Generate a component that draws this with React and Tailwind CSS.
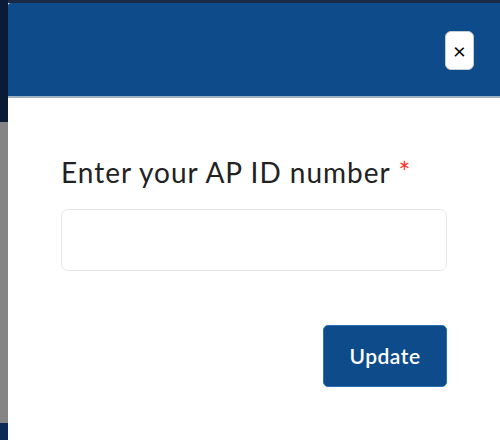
const App = () => {
  return (
    <div className="flex w-[500px] h-[440px] bg-white overflow-hidden" style={{ fontFamily: "Lato, 'Noto Sans', sans-serif" }}>
      <div className="flex flex-col w-[8px] shrink-0">
        <div className="h-[122px] bg-[#0a1b38]" />
        <div className="flex-1 bg-[#858585]" />
        <div className="h-[17px] bg-[#0b2a55]" />
      </div>
      <div className="flex flex-col flex-1">
        <div className="h-[3px] bg-[#1a2a44]" />
        <div className="h-[93px] bg-[#0d4b8a] rounded-tl-[3px] flex items-start justify-end pr-[26px] pt-[28px]">
          <button className="w-[29px] h-[39px] bg-white rounded-[6px] border border-[#c8ccd2] flex items-center justify-center text-[22px] leading-none text-black">
            ×
          </button>
        </div>
        <div className="h-[2px] bg-[#9fb0c2]" />
        <div className="flex-1 bg-white rounded-tl-[4px] pl-[53px] pr-[53px] pt-[58px]">
          <div className="text-[28px] leading-[32px] tracking-[1px] text-[#222]">
            Enter your AP ID number <span className="text-[#ff3030] leading-none">*</span>
          </div>
          <input className="mt-[21px] w-[386px] h-[62px] rounded-[7px] border border-[#e6e6e6] outline-none px-3" />
          <div className="flex justify-end w-[386px] mt-[54px]">
            <button className="w-[124px] h-[62px] bg-[#0d4b8a] border border-[#2a6fb5] rounded-[5px] text-white text-[21px] font-semibold tracking-[0.5px]">
              Update
            </button>
          </div>
        </div>
      </div>
    </div>
  );
};

export default App;
